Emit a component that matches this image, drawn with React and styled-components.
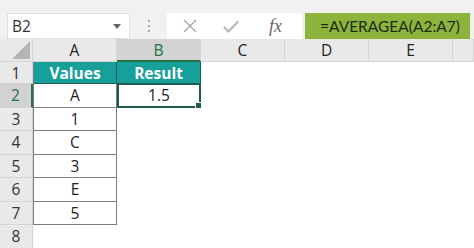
import React from "react";
import styled, { createGlobalStyle } from "styled-components";

const GlobalStyle = createGlobalStyle`
  body {
    margin: 0;
    background: #ffffff;
    font-family: "Open Sans", "Noto Sans", sans-serif;
  }
`;

const Page = styled.div`
  width: 474px;
  height: 248px;
  overflow: hidden;
  display: flex;
  flex-direction: column;
  background: #ffffff;
`;

const Toolbar = styled.div`
  height: 52px;
  background: #f1f1f1;
  display: flex;
  align-items: flex-start;
  padding: 13px 0 0 7px;
  box-sizing: border-box;
`;

const NameBox = styled.div`
  flex: none;
  width: 123px;
  height: 26px;
  background: #ffffff;
  border: 1px solid #e0e0e0;
  box-sizing: border-box;
  display: flex;
  align-items: center;
  justify-content: space-between;
  padding: 0 8px 0 4px;
  font-size: 15.5px;
  color: #333;
`;

const Caret = styled.span`
  width: 0;
  height: 0;
  border-left: 4px solid transparent;
  border-right: 4px solid transparent;
  border-top: 5px solid #666;
`;

const Grip = styled.div`
  flex: none;
  width: 37px;
  height: 26px;
  display: flex;
  flex-direction: column;
  align-items: center;
  justify-content: center;
  gap: 3px;
  span {
    width: 2px;
    height: 2px;
    background: #a9a9a9;
  }
`;

const ActionBox = styled.div`
  flex: none;
  width: 135px;
  height: 26px;
  background: #ffffff;
  display: flex;
  align-items: center;
  box-sizing: border-box;
  padding-left: 16px;
  gap: 26px;
  color: #a6a6a6;
`;

const Fx = styled.span`
  font-family: "Liberation Serif", serif;
  font-style: italic;
  font-size: 18px;
  color: #666;
  margin-left: 4px;
`;

const FormulaBox = styled.div`
  flex: none;
  margin-left: 3px;
  width: 165px;
  height: 26px;
  background: #8cb43c;
  box-sizing: border-box;
  padding-left: 15px;
  display: flex;
  align-items: center;
  overflow: hidden;
  font-family: "Lato", "Open Sans", sans-serif;
  font-size: 15.5px;
  color: #1d2a10;
  white-space: nowrap;
`;

const Sheet = styled.div`
  display: grid;
  grid-template-columns: 33px repeat(5, 84px) 1fr;
  grid-template-rows: 23px 22px repeat(7, 23.5px);
`;

const Corner = styled.div`
  background: #e9e9e9;
  border-bottom: 1px solid #d4d4d4;
  border-right: 1px solid #d4d4d4;
  position: relative;
  &::after {
    content: "";
    position: absolute;
    right: 2px;
    bottom: 2px;
    border-left: 18px solid transparent;
    border-bottom: 18px solid #b4b4b4;
  }
`;

const ColHead = styled.div`
  background: ${(p) => (p.$active ? "#d2d2d2" : "#e9e9e9")};
  border-right: 1px solid #d4d4d4;
  border-bottom: ${(p) => (p.$active ? "2px solid #217346" : "1px solid #d4d4d4")};
  box-sizing: border-box;
  display: flex;
  align-items: center;
  justify-content: center;
  font-size: 15.5px;
  color: ${(p) => (p.$active ? "#217346" : "#222")};
`;

const RowHead = styled.div`
  background: ${(p) => (p.$active ? "#d2d2d2" : "#e9e9e9")};
  border-bottom: 1px solid #d4d4d4;
  border-right: ${(p) => (p.$active ? "2px solid #217346" : "1px solid #d4d4d4")};
  box-sizing: border-box;
  display: flex;
  align-items: center;
  justify-content: center;
  font-size: 15.5px;
  color: ${(p) => (p.$active ? "#217346" : "#333")};
`;

const Cell = styled.div`
  box-sizing: border-box;
  display: flex;
  align-items: center;
  justify-content: center;
  font-size: 15.5px;
  color: #222;
  position: relative;
  ${(p) =>
    p.$head &&
    `background: #17a09b; color: #fff; font-weight: 700; border-right: 1px solid #1f5e58; border-bottom: 1px solid #1f5e58;`}
  ${(p) => p.$boxed && `border-right: 1px solid #7d7d7d; border-bottom: 1px solid #7d7d7d;`}
  ${(p) =>
    p.$selected &&
    `border: 2px solid #1d5c4a; border-top: 1px solid #1d5c4a;`}
  ${(p) => p.$left && `border-left: 1px solid #7d7d7d;`}
`;

const Handle = styled.span`
  position: absolute;
  right: -3px;
  bottom: -3px;
  width: 5px;
  height: 5px;
  background: #1d5c4a;
  border: 1px solid #fff;
`;

const Blank = styled.div``;

const cols = ["A", "B", "C", "D", "E"];
const values = ["A", "1", "C", "3", "E", "5"];

const XIcon = () => (
  <svg width="14" height="14" viewBox="0 0 14 14">
    <path d="M1 1 L13 13 M13 1 L1 13" stroke="#a6a6a6" strokeWidth="1.4" fill="none" />
  </svg>
);

const CheckIcon = () => (
  <svg width="16" height="13" viewBox="0 0 16 13">
    <path d="M1 7 L5.5 11.5 L15 1.5" stroke="#b5b5b5" strokeWidth="2" fill="none" />
  </svg>
);

export default function App() {
  return (
    <Page>
      <GlobalStyle />
      <Toolbar>
        <NameBox>
          B2
          <Caret />
        </NameBox>
        <Grip>
          <span />
          <span />
          <span />
        </Grip>
        <ActionBox>
          <XIcon />
          <CheckIcon />
          <Fx>fx</Fx>
        </ActionBox>
        <FormulaBox>=AVERAGEA(A2:A7)</FormulaBox>
      </Toolbar>
      <Sheet>
        <Corner />
        {cols.map((c) => (
          <ColHead key={c} $active={c === "B"}>
            {c}
          </ColHead>
        ))}
        <ColHead />

        <RowHead>1</RowHead>
        <Cell $head $left>Values</Cell>
        <Cell $head>Result</Cell>
        <Blank />
        <Blank />
        <Blank />
        <Blank />

        {values.map((v, i) => (
          <React.Fragment key={i}>
            <RowHead $active={i === 0}>{i + 2}</RowHead>
            <Cell $boxed $left>{v}</Cell>
            {i === 0 ? (
              <Cell $selected>
                1.5
                <Handle />
              </Cell>
            ) : (
              <Blank />
            )}
            <Blank />
            <Blank />
            <Blank />
            <Blank />
          </React.Fragment>
        ))}
        <RowHead>8</RowHead>
      </Sheet>
    </Page>
  );
}
